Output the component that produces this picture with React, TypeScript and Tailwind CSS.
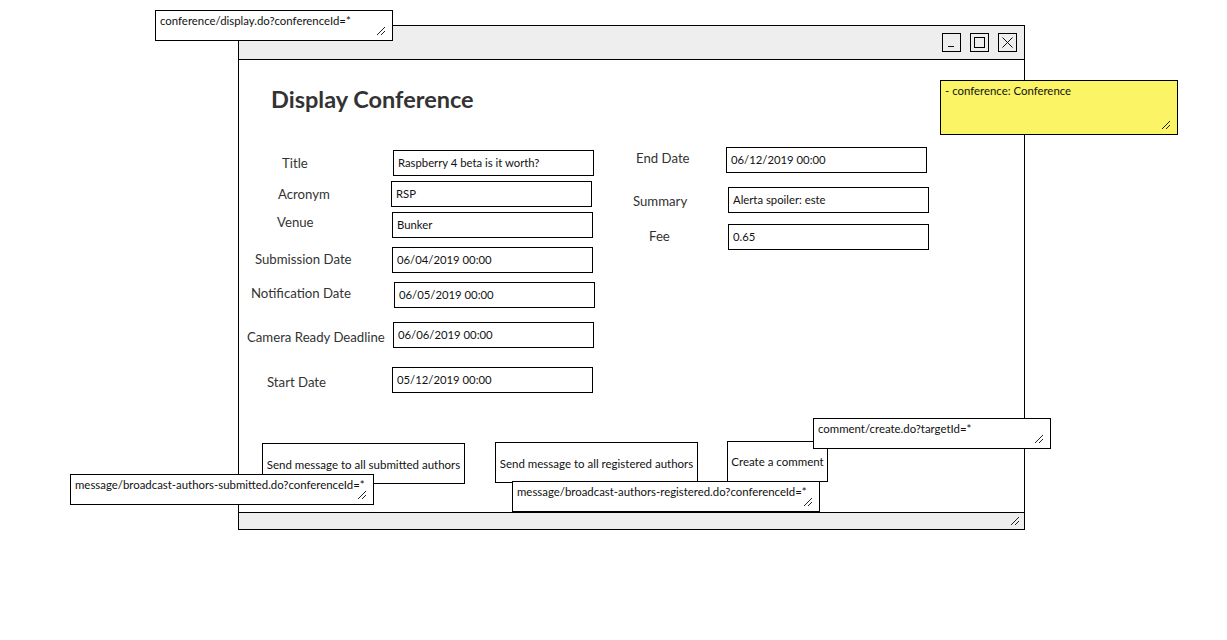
import React from "react"

const font = { fontFamily: "Lato, 'Open Sans', sans-serif" }

function Grip({ className = "" }: { className?: string }) {
  return (
    <svg width="10" height="10" viewBox="0 0 10 10" className={className}>
      <path d="M1 9 L9 1 M5 9 L9 5" stroke="#222" strokeWidth="1" fill="none" />
    </svg>
  )
}

// sticky link notes lying over the mockup
function Note({ text, x, y, w, h, yellow = false }: { text: string; x: number; y: number; w: number; h: number; yellow?: boolean }) {
  return (
    <div
      className={`absolute border border-black px-[4px] pt-[3px] text-[11.4px] leading-[14px] text-[#111] ${yellow ? "bg-[#fbf566]" : "bg-white"}`}
      style={{ left: x, top: y, width: w, height: h }}
    >
      {text}
      <Grip className="absolute right-[6px] bottom-[4px]" />
    </div>
  )
}

// wireframe widgets are hand-placed on the mockup canvas
function Field({ label, value, lx, ly, ix, iy }: { label: string; value: string; lx: number; ly: number; ix: number; iy: number }) {
  return (
    <>
      <span className="absolute text-[13.2px] leading-[16px] text-[#333]" style={{ left: lx, top: ly - 8 }}>
        {label}
      </span>
      <div
        className="absolute flex h-[26px] w-[201px] items-center border border-black bg-white px-[4px] text-[11.3px] text-[#111]"
        style={{ left: ix, top: iy }}
      >
        {value}
      </div>
    </>
  )
}

function WinButton({ children }: { children: React.ReactNode }) {
  return <div className="flex h-[19px] w-[19px] items-center justify-center border border-black bg-[#eee]">{children}</div>
}

export default function App() {
  return (
    <div className="relative h-[640px] w-[1227px] overflow-hidden bg-white" style={font}>
      <div className="absolute left-[238px] top-[25px] flex h-[505px] w-[787px] flex-col border border-black bg-white">
        <div className="flex h-[34px] items-center justify-end gap-[9px] border-b border-black bg-[#eee] pr-[7px]">
          <WinButton>
            <svg width="17" height="17" viewBox="0 0 17 17">
              <path d="M5 12.5 H11" stroke="#111" strokeWidth="1" />
            </svg>
          </WinButton>
          <WinButton>
            <div className="h-[11px] w-[11px] border border-black" />
          </WinButton>
          <WinButton>
            <svg width="17" height="17" viewBox="0 0 17 17">
              <path d="M3.5 3.5 L13.5 13.5 M13.5 3.5 L3.5 13.5" stroke="#111" strokeWidth="1" />
            </svg>
          </WinButton>
        </div>
        <div className="flex-1 pl-[32px] pt-[24px]">
          <h1 className="text-[23.5px] font-bold leading-[30px] text-[#333]">Display Conference</h1>
        </div>
        <div className="relative h-[17px] border-t border-black bg-[#eee]">
          <Grip className="absolute right-[4px] bottom-[3px]" />
        </div>
      </div>

      <Field label="Title" value="Raspberry 4 beta is it worth?" lx={282} ly={163} ix={393} iy={150} />
      <Field label="Acronym" value="RSP" lx={278} ly={194} ix={391} iy={181} />
      <Field label="Venue" value="Bunker" lx={277} ly={222} ix={392} iy={212} />
      <Field label="Submission Date" value="06/04/2019 00:00" lx={255} ly={259} ix={392} iy={247} />
      <Field label="Notification Date" value="06/05/2019 00:00" lx={251} ly={293} ix={394} iy={282} />
      <Field label="Camera Ready Deadline" value="06/06/2019 00:00" lx={247} ly={337} ix={393} iy={322} />
      <Field label="Start Date" value="05/12/2019 00:00" lx={267} ly={382} ix={392} iy={367} />
      <Field label="End Date" value="06/12/2019 00:00" lx={636} ly={158} ix={726} iy={147} />
      <Field label="Summary" value="Alerta spoiler: este" lx={633} ly={201} ix={728} iy={187} />
      <Field label="Fee" value="0.65" lx={649} ly={236} ix={728} iy={224} />

      <button className="absolute left-[262px] top-[443px] flex h-[41px] w-[203px] items-center justify-center border border-black bg-white pt-[2px] text-[11.5px] text-[#111]">
        Send message to all submitted authors
      </button>
      <button className="absolute left-[495px] top-[442px] flex h-[41px] w-[203px] items-center justify-center border border-black bg-white pt-[2px] text-[11.5px] text-[#111]">
        Send message to all registered authors
      </button>
      <button className="absolute left-[727px] top-[441px] flex h-[41px] w-[101px] items-center justify-center border border-black bg-white text-[11.5px] text-[#111]">
        Create a comment
      </button>

      <Note text="conference/display.do?conferenceId=*" x={155} y={10} w={238} h={31} />
      <Note text="- conference: Conference" x={940} y={80} w={238} h={55} yellow />
      <Note text="comment/create.do?targetId=*" x={813} y={418} w={238} h={31} />
      <Note text="message/broadcast-authors-submitted.do?conferenceId=*" x={70} y={474} w={304} h={31} />
      <Note text="message/broadcast-authors-registered.do?conferenceId=*" x={512} y={481} w={308} h={31} />
    </div>
  )
}
